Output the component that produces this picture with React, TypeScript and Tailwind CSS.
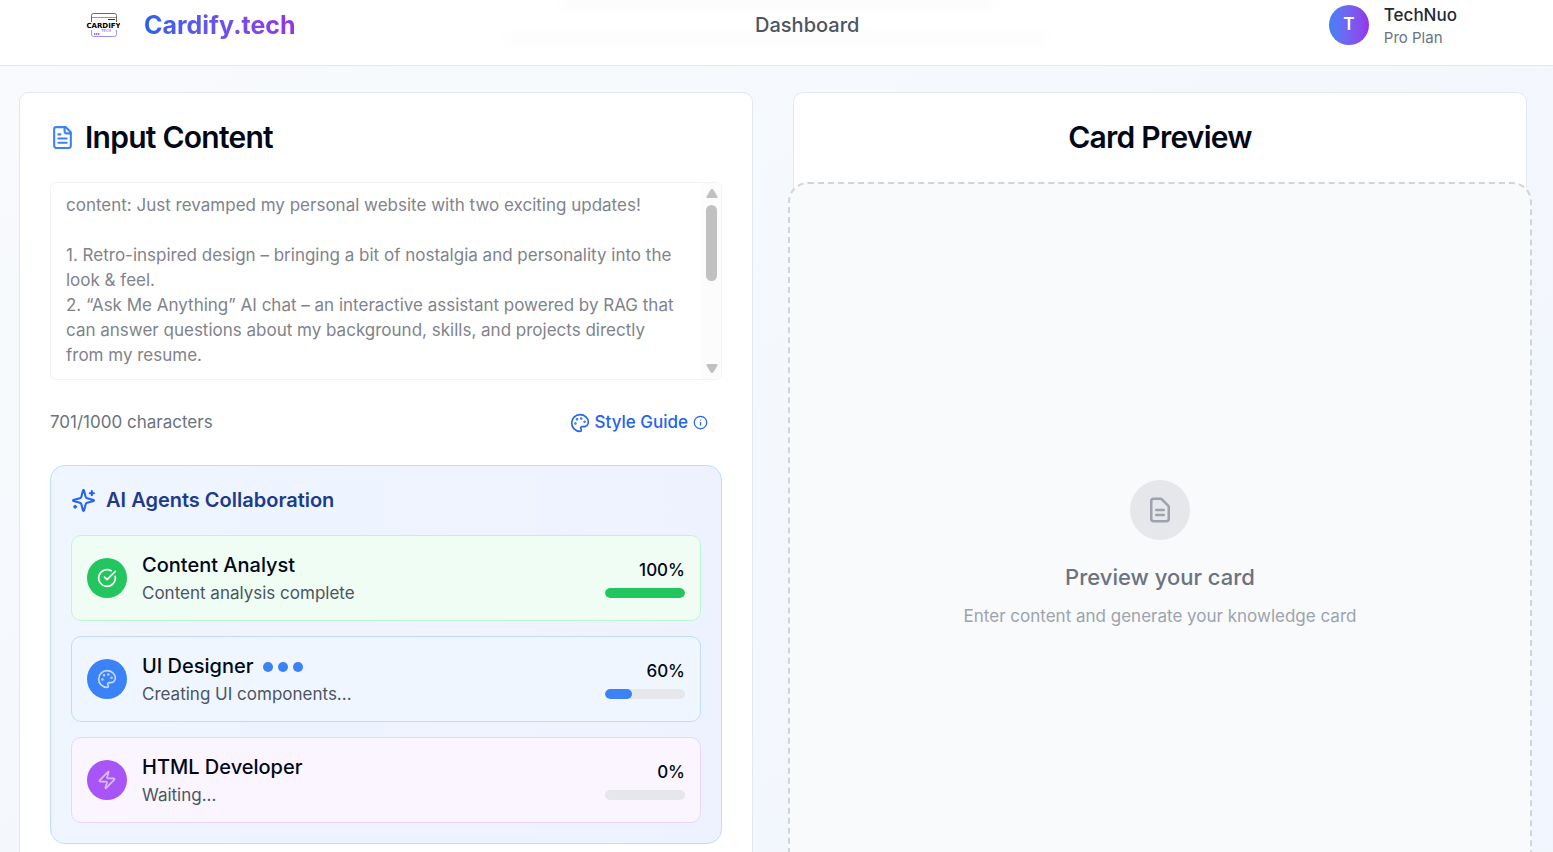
import type { ReactNode } from "react";
import { CircleCheckBig, Info, Zap } from "lucide-react";

const CONTENT = `content: Just revamped my personal website with two exciting updates!

1. Retro-inspired design – bringing a bit of nostalgia and personality into the look & feel.
2. “Ask Me Anything” AI chat – an interactive assistant powered by RAG that can answer questions about my background, skills, and projects directly from my resume.`;

interface IconProps {
  className?: string;
  children?: ReactNode;
}

function Icon({ className, children }: IconProps) {
  return (
    <svg
      viewBox="0 0 24 24"
      fill="none"
      stroke="currentColor"
      strokeWidth="2"
      strokeLinecap="round"
      strokeLinejoin="round"
      className={className}
      aria-hidden="true"
    >
      {children}
    </svg>
  );
}

function Palette({ className }: IconProps) {
  return (
    <Icon className={className}>
      <circle cx="13.5" cy="6.5" r=".5" fill="currentColor" />
      <circle cx="17.5" cy="10.5" r=".5" fill="currentColor" />
      <circle cx="8.5" cy="7.5" r=".5" fill="currentColor" />
      <circle cx="6.5" cy="12.5" r=".5" fill="currentColor" />
      <path d="M12 2C6.5 2 2 6.5 2 12s4.5 10 10 10c.926 0 1.648-.746 1.648-1.688 0-.437-.18-.835-.437-1.125-.29-.289-.438-.652-.438-1.125a1.64 1.64 0 0 1 1.668-1.668h1.996c3.051 0 5.555-2.503 5.555-5.554C21.965 6.012 17.461 2 12 2z" />
    </Icon>
  );
}

function Sparkles({ className }: IconProps) {
  return (
    <Icon className={className}>
      <path d="M9.937 15.5A2 2 0 0 0 8.5 14.063l-6.135-1.582a.5.5 0 0 1 0-.962L8.5 9.936A2 2 0 0 0 9.937 8.5l1.582-6.135a.5.5 0 0 1 .963 0L14.063 8.5A2 2 0 0 0 15.5 9.937l6.135 1.581a.5.5 0 0 1 0 .964L15.5 14.063a2 2 0 0 0-1.437 1.437l-1.582 6.135a.5.5 0 0 1-.963 0z" />
      <path d="M20 3v4M22 5h-4M4 17v2M5 18H3" />
    </Icon>
  );
}

function FileText({ className }: IconProps) {
  return (
    <Icon className={className}>
      <path d="M15 2H6a2 2 0 0 0-2 2v16a2 2 0 0 0 2 2h12a2 2 0 0 0 2-2V7Z" />
      <path d="M14 2v4a2 2 0 0 0 2 2h4" />
      <path d="M10 9H8M16 13H8M16 17H8" />
    </Icon>
  );
}

function Logo() {
  return (
    <svg viewBox="0 0 34 26" className="h-[26px] w-[34px]" fill="none" aria-hidden="true">
      <path d="M5.5 10V3.5a2 2 0 0 1 2-2h21a2 2 0 0 1 2 2V10" stroke="#666" />
      <path d="M6 5.500h24" stroke="#999" />
      <path d="M22 7.500h7" stroke="#333" />
      <path d="M5.500 18v4.500a2 2 0 0 0 2 2h21a2 2 0 0 0 2-2V18" stroke="#a78bfa" />
      <path d="M8 22h5.500" stroke="#7c3aed" strokeWidth="1.500" strokeDasharray="1.400 .6" />
      <text
        x="17.500"
        y="15.500"
        textAnchor="middle"
        className="fill-black font-['DejaVu_Sans',sans-serif] text-[7px] font-bold"
      >
        CARDIFY
      </text>
      <text
        x="20"
        y="20"
        textAnchor="middle"
        className="fill-violet-500 font-['DejaVu_Sans_Mono',monospace] text-[4px]"
      >
        TECH
      </text>
    </svg>
  );
}

interface Agent {
  name: string;
  status: string;
  percent: number;
  fill: number;
  icon: ReactNode;
  box: string;
  accent: string;
  active?: boolean;
}

const agents: Agent[] = [
  {
    name: "Content Analyst",
    status: "Content analysis complete",
    percent: 100,
    fill: 100,
    icon: <CircleCheckBig className="h-5 w-5 text-white" />,
    box: "border-[#bbf7d0] bg-[#f0fdf4]",
    accent: "bg-[#22c55e]",
  },
  {
    name: "UI Designer",
    status: "Creating UI components...",
    percent: 60,
    fill: 34,
    icon: <Palette className="h-5 w-5 text-white/70" />,
    box: "border-[#bfdbfe] bg-[#eff6ff]",
    accent: "bg-[#3b82f6]",
    active: true,
  },
  {
    name: "HTML Developer",
    status: "Waiting...",
    percent: 0,
    fill: 0,
    icon: <Zap className="h-5 w-5 text-white/60" />,
    box: "border-[#e9d5ff] bg-[#faf5ff]",
    accent: "bg-[#a855f7]",
  },
];

function AgentRow({ agent }: { agent: Agent }) {
  return (
    <li className={`flex items-center gap-[15px] rounded-[10px] border px-[15px] py-[14px] ${agent.box}`}>
      <div className={`flex h-10 w-10 shrink-0 items-center justify-center rounded-full ${agent.accent}`}>
        {agent.icon}
      </div>
      <div className="min-w-0 flex-1">
        <div className="flex items-center gap-[10px]">
          <h4 className="text-[20px] leading-[31px] font-medium text-[#020817]">{agent.name}</h4>
          {agent.active && (
            <div className="flex gap-[5px]">
              <span className="h-[10px] w-[10px] rounded-full bg-[#3b82f6]" />
              <span className="h-[10px] w-[10px] rounded-full bg-[#3b82f6]" />
              <span className="h-[10px] w-[10px] rounded-full bg-[#3b82f6]" />
            </div>
          )}
        </div>
        <p className="text-[17px] leading-[25px] text-[#4b5563]">{agent.status}</p>
      </div>
      <div className="w-20 shrink-0">
        <div className="mb-[5px] text-right text-[17px] leading-[25px] font-medium text-[#020817]">
          {agent.percent}%
        </div>
        <div
          role="progressbar"
          aria-label={agent.name}
          aria-valuenow={agent.percent}
          className="h-[10px] overflow-hidden rounded-full bg-[#e5e7eb]"
        >
          <div className={`h-full rounded-full ${agent.accent}`} style={{ width: `${agent.fill}%` }} />
        </div>
      </div>
    </li>
  );
}

function Header() {
  return (
    <header className="sticky top-0 z-10 overflow-hidden border-b border-[#e5e7eb] bg-white pr-24 pb-[15px] pl-[86px]">
      {/* page heading showing faintly through the bar */}
      <div className="absolute -top-1 left-1/2 h-3 w-[430px] -translate-x-1/2 bg-black/[0.02] blur-[6px]" />
      <div className="absolute top-8 left-1/2 h-3 w-[540px] -translate-x-1/2 bg-black/[0.01] blur-[6px]" />
      <div className="relative flex h-[50px] items-center justify-between">
        <a href="#" className="flex items-center gap-6">
          <Logo />
          <span className="bg-gradient-to-r from-[#2563eb] to-[#9333ea] bg-clip-text text-[25px] leading-[35px] font-bold text-transparent">
            Cardify.tech
          </span>
        </a>
        <nav className="mr-[10px]">
          <a href="#" className="text-[20px] leading-[30px] font-medium text-[#4b5563]">
            Dashboard
          </a>
        </nav>
        <div className="flex items-center gap-[15px]">
          <div className="flex h-10 w-10 items-center justify-center rounded-full bg-gradient-to-r from-[#3b82f6] to-[#9333ea] text-[17px] font-semibold text-white">
            T
          </div>
          <div>
            <p className="text-[17px] leading-[25px] font-medium text-[#1f2937]">TechNuo</p>
            <p className="text-[15px] leading-[20px] text-[#6b7280]">Pro Plan</p>
          </div>
        </div>
      </div>
    </header>
  );
}

function InputCard() {
  return (
    <section className="rounded-[10px] border border-[#e2e8f0] bg-white px-[30px] pt-[29px] pb-[30px]">
      <div className="mb-[30px] flex items-center gap-[10px]">
        <FileText className="h-[25px] w-[25px] text-[#3b82f6]" />
        <h2 className="text-[30px] leading-[30px] font-semibold tracking-tight text-[#020817]">Input Content</h2>
      </div>

      <div className="flex h-[198px] overflow-hidden rounded-md border border-[#f0f3f7]">
        <textarea
          aria-label="Content"
          defaultValue={CONTENT}
          className="block min-w-0 flex-1 resize-none overflow-hidden py-[10px] pr-5 pl-[15px] text-[17px] leading-[25px] text-[#80838b] outline-none"
        />
        <div className="flex w-[19px] flex-col items-center bg-[#fcfcfc] py-[6px]">
          <svg viewBox="0 0 12 10" className="h-[10px] w-3 fill-[#c1c1c1]">
            <path d="M6 0Q7 0 7.600 1L11.500 7.500Q12 9 10.500 9H1.500Q0 9 .5 7.500L4.400 1Q5 0 6 0Z" />
          </svg>
          <div className="mt-[6px] h-[76px] w-[11px] rounded-full bg-[#c1c1c1]" />
          <svg viewBox="0 0 12 10" className="mt-auto h-[10px] w-3 fill-[#c1c1c1]">
            <path d="M6 10Q5 10 4.400 9L.5 2.500Q0 1 1.500 1H10.500Q12 1 11.500 2.500L7.600 9Q7 10 6 10Z" />
          </svg>
        </div>
      </div>

      <div className="my-[30px] flex items-center justify-between text-[17px] leading-[25px]">
        <span className="text-[#6b7280]">701/1000 characters</span>
        <button type="button" className="flex items-center gap-[5px] px-[14px] font-medium text-[#2563eb]">
          <Palette className="h-5 w-5" />
          Style Guide
          <Info className="h-[15px] w-[15px]" />
        </button>
      </div>

      <div className="rounded-[15px] border border-[#bfdbfe] bg-gradient-to-r from-[#eff6ff] to-[#eef2ff] p-5">
        <div className="mb-[21px] flex items-center gap-[10px]">
          <Sparkles className="h-[25px] w-[25px] text-[#2563eb]" />
          <h3 className="text-[20px] leading-[28px] font-semibold text-[#1e3a8a]">AI Agents Collaboration</h3>
        </div>
        <ul className="flex flex-col gap-[15px]">
          {agents.map((agent) => (
            <AgentRow key={agent.name} agent={agent} />
          ))}
        </ul>
      </div>
    </section>
  );
}

function PreviewCard() {
  return (
    <section className="flex flex-col rounded-[10px] border border-[#e2e8f0] bg-white pt-[29px]">
      <h2 className="mb-[30px] text-center text-[30px] leading-[30px] font-semibold tracking-tight text-[#020817]">
        Card Preview
      </h2>
      <div className="-mx-[6px] flex min-h-[744px] flex-1 flex-col items-center justify-center rounded-[20px] border-2 border-dashed border-[#d1d5db] bg-[#f9fafb]">
        <div className="mb-5 flex h-[60px] w-[60px] items-center justify-center rounded-full bg-[#e5e7eb]">
          <Icon className="h-[30px] w-[30px] text-[#9ca3af]">
            <path d="M9 12h6m-6 4h6m2 5H7a2 2 0 01-2-2V5a2 2 0 012-2h5.586a1 1 0 01.707.293l5.414 5.414a1 1 0 01.293.707V19a2 2 0 01-2 2z" />
          </Icon>
        </div>
        <h3 className="mb-[10px] text-[22px] leading-[34px] font-medium text-[#6b7280]">Preview your card</h3>
        <p className="text-[17px] leading-[25px] text-[#9ca3af]">
          Enter content and generate your knowledge card
        </p>
      </div>
    </section>
  );
}

export default function App() {
  return (
    <div className="h-screen overflow-y-auto bg-white font-['Inter',sans-serif] [scrollbar-width:none]">
      <div className="bg-gradient-to-br from-[#f8fafc] via-[#f4f8fd] to-[#f1f5fd]">
        <Header />
        <main className="grid grid-cols-2 gap-10 pt-[26px] pr-[26px] pb-10 pl-[19px]">
          <InputCard />
          <PreviewCard />
        </main>
      </div>
    </div>
  );
}
